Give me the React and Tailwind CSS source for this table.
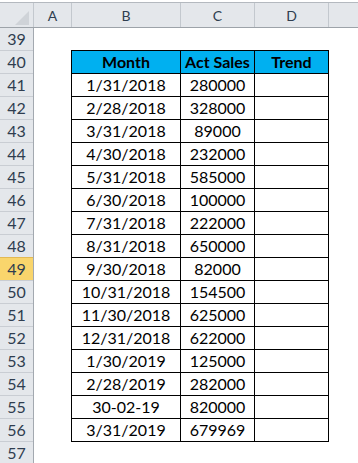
import React from "react";

const rows = [
  ["1/31/2018", "280000"],
  ["2/28/2018", "328000"],
  ["3/31/2018", "89000"],
  ["4/30/2018", "232000"],
  ["5/31/2018", "585000"],
  ["6/30/2018", "100000"],
  ["7/31/2018", "222000"],
  ["8/31/2018", "650000"],
  ["9/30/2018", "82000"],
  ["10/31/2018", "154500"],
  ["11/30/2018", "625000"],
  ["12/31/2018", "622000"],
  ["1/30/2019", "125000"],
  ["2/28/2019", "282000"],
  ["30-02-19", "820000"],
  ["3/31/2019", "679969"],
];

const rowNumbers = [40, 41, 42, 43, 44, 45, 46, 47, 48, 49, 50, 51, 52, 53, 54, 55, 56, 57];

function ColumnHeaders() {
  return (
    <div className="pt-[2px] bg-white">
      <div className="h-[26px] flex bg-[#e4e7eb] border-t border-b border-t-[#b4b9bf] border-b-[#9da3a9] text-[14px] text-[#2f3d4f]">
        <div className="w-[34px] flex items-end justify-end pr-[4px] pb-[2px] border-r border-[#c3c8ce]">
          <svg width="14" height="14" viewBox="0 0 14 14">
            <polygon points="0,14 14,14 14,0" fill="#cfd3d8" />
          </svg>
        </div>
        <div className="w-[38px] flex items-center justify-center border-r border-[#c3c8ce]">A</div>
        <div className="w-[109px] flex items-center justify-center border-r border-[#c3c8ce]">B</div>
        <div className="w-[74px] flex items-center justify-center border-r border-[#c3c8ce]">C</div>
        <div className="w-[74px] flex items-center justify-center border-r border-[#c3c8ce]">D</div>
        <div className="flex-1"></div>
      </div>
    </div>
  );
}

function RowHeadings() {
  return (
    <div className="w-[34px] flex flex-col border-r border-[#a3a9b0] bg-[#e4e7eb] text-[16px] text-[#2f3d4f]">
      <div className="h-[22px] flex items-center justify-center">39</div>
      {rowNumbers.map((n) => (
        <div
          key={n}
          className={`h-[23px] flex items-center justify-center border-t ${
            n === 49 ? "bg-[#f9d56c] border-[#e2b954]" : "border-[#c9cdd3]"
          }`}
        >
          {n}
        </div>
      ))}
    </div>
  );
}

export default function App() {
  return (
    <div
      className="w-[358px] h-[463px] overflow-hidden bg-white"
      style={{ fontFamily: "Lato, 'Liberation Sans', sans-serif" }}
    >
      <ColumnHeaders />
      <div className="flex">
        <RowHeadings />
        <div className="flex-1 pt-[22px]">
          <div className="ml-[37px] w-[258px] flex flex-col border-b border-black text-[16px] text-black">
            <div className="h-[23px] flex border-t border-black bg-[#00b0f0] font-bold">
              <div className="w-[109px] flex items-center justify-center border-l border-black">Month</div>
              <div className="w-[74px] flex items-center justify-center border-l border-black">Act Sales</div>
              <div className="w-[75px] flex items-center justify-center border-l border-r border-black">Trend</div>
            </div>
            {rows.map(([month, sales]) => (
              <div key={month} className="h-[23px] flex border-t border-black">
                <div className="w-[109px] flex items-center justify-center border-l border-black">{month}</div>
                <div className="w-[74px] flex items-center justify-center border-l border-black">{sales}</div>
                <div className="w-[75px] border-l border-r border-black"></div>
              </div>
            ))}
          </div>
        </div>
      </div>
    </div>
  );
}
